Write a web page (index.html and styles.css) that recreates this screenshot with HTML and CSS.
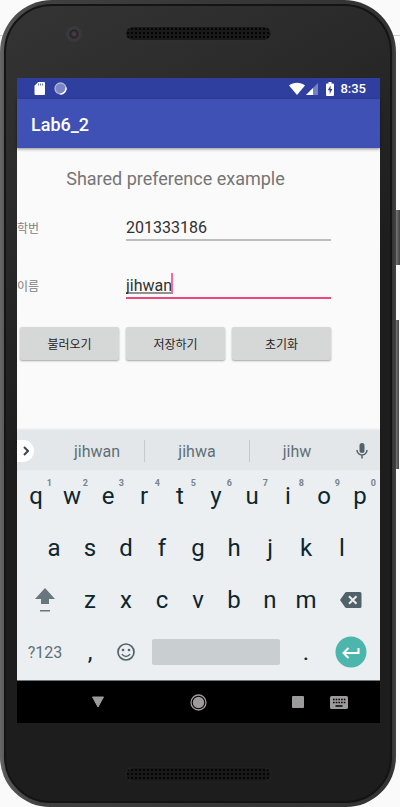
FILE: index.html
```html
<!DOCTYPE html>
<html lang="ko">
<head>
<meta charset="utf-8">
<meta name="viewport" content="width=device-width, initial-scale=1">
<title>Lab6_2</title>
<link rel="stylesheet" href="styles.css">
</head>
<body>
<div class="phone">
  <span class="side-button power"></span>
  <span class="side-button volume"></span>
  <div class="shell">
    <div class="bezel top"><span class="camera"></span><span class="speaker"></span></div>
    <div class="screen">
      <div class="status">
        <svg width="12" height="13" viewBox="0 0 12 13"><path fill="#fff" d="M4.200 0H10a1 1 0 0 1 1 1v11a1 1 0 0 1-1 1H1.500a1 1 0 0 1-1-1V3.800z"/><path stroke="#6f7bc0" stroke-width="1" d="M4.500 1.500v2M6.500 1.500v2M8.500 1.500v2"/></svg>
        <svg class="sync" width="13" height="13" viewBox="0 0 13 13"><circle cx="6.500" cy="6.500" r="5.500" fill="#7d86c5" stroke="#b0b6df" stroke-width="1.300"/><path d="M12 5.500A5.800 5.800 0 0 1 6.500 12" fill="none" stroke="#fff" stroke-width="1.400"/></svg>
        <svg class="wifi" width="16" height="13" viewBox="0 0 16 13"><path fill="#fff" d="M0 3.500C4.500-.2 11.500-.2 16 3.500L8 13z"/></svg>
        <svg width="12" height="12" viewBox="0 0 12 12"><path fill="#7781c3" d="M12 0v12H0z"/><path fill="#fff" d="M7 5v7H0z"/></svg>
        <svg class="battery" width="8" height="14" viewBox="0 0 8 14"><path fill="#fff" d="M2.500 0h3v1.500H7a1 1 0 0 1 1 1V13a1 1 0 0 1-1 1H1a1 1 0 0 1-1-1V2.500a1 1 0 0 1 1-1h1.500z"/><path fill="#2f3f9f" d="M4.600 3.500 1.800 8.300h1.900V12l2.700-5H4.600z"/></svg>
        <span class="clock">8:35</span>
      </div>
      <header class="appbar"><h1>Lab6_2</h1></header>
      <main>
        <h2>Shared preference example</h2>
        <form>
          <div class="field">
            <label for="sid">학번</label>
            <div class="box"><input id="sid" type="text" value="201333186"></div>
          </div>
          <div class="field">
            <label for="name">이름</label>
            <div class="box active"><input id="name" type="text" value="jihwan"><span class="caret"></span></div>
          </div>
          <div class="actions">
            <button type="button">불러오기</button>
            <button type="button">저장하기</button>
            <button type="button">초기화</button>
          </div>
        </form>
      </main>
      <div class="suggestions">
        <button type="button" class="more" aria-label="More"><svg width="6" height="10" viewBox="0 0 6 10"><path d="M1 1l4 4-4 4" fill="none" stroke="#37474f" stroke-width="2"/></svg></button>
        <button type="button">jihwan</button>
        <button type="button" class="middle">jihwa</button>
        <button type="button">jihw</button>
        <button type="button" aria-label="Voice input"><svg width="12" height="16" viewBox="0 0 12 16"><rect x="3.500" width="5" height="10" rx="2.500" fill="#52636b"/><path d="M1 7a5 5 0 0 0 10 0M6 12v3.500" fill="none" stroke="#52636b" stroke-width="1.500"/></svg></button>
      </div>
      <div class="keyboard">
        <div class="keys">
          <button type="button">q<sup>1</sup></button><button type="button">w<sup>2</sup></button><button type="button">e<sup>3</sup></button><button type="button">r<sup>4</sup></button><button type="button">t<sup>5</sup></button><button type="button">y<sup>6</sup></button><button type="button">u<sup>7</sup></button><button type="button">i<sup>8</sup></button><button type="button">o<sup>9</sup></button><button type="button">p<sup>0</sup></button>
        </div>
        <div class="keys home">
          <button type="button">a</button><button type="button">s</button><button type="button">d</button><button type="button">f</button><button type="button">g</button><button type="button">h</button><button type="button">j</button><button type="button">k</button><button type="button">l</button>
        </div>
        <div class="keys">
          <button type="button" class="wide" aria-label="Shift"><svg width="20" height="24" viewBox="0 0 20 24"><path fill="#68777d" d="M10 0l10 11h-6v5H6v-5H0z"/><path fill="#68777d" d="M5 22h10v1.500H5z"/></svg></button><button type="button">z</button><button type="button">x</button><button type="button">c</button><button type="button">v</button><button type="button">b</button><button type="button">n</button><button type="button">m</button><button type="button" class="wide" aria-label="Backspace"><svg width="22" height="16" viewBox="0 0 22 16"><path fill="#50616a" d="M6.500 0H20a1.500 1.500 0 0 1 1.500 1.500v13A1.500 1.500 0 0 1 20 16H6.500a2 2 0 0 1-1.600-.9L0 8 4.900.9A2 2 0 0 1 6.500 0z"/><path d="M9 4.200l7.500 7.600M16.500 4.200 9 11.800" stroke="#eceff1" stroke-width="2"/></svg></button>
        </div>
        <div class="keys">
          <button type="button" class="wide symbols">?123</button><button type="button">,</button><button type="button" aria-label="Emoji"><svg width="18" height="18" viewBox="0 0 18 18"><circle cx="9" cy="9" r="8" fill="none" stroke="#52636b" stroke-width="1.700"/><circle cx="6" cy="7" r="1.300" fill="#52636b"/><circle cx="12" cy="7" r="1.300" fill="#52636b"/><path d="M5 11a4.500 4.500 0 0 0 8 0" fill="none" stroke="#52636b" stroke-width="1.500"/></svg></button><button type="button" class="space" aria-label="Space"><span></span></button><button type="button">.</button><button type="button" class="wide" aria-label="Enter"><svg width="32" height="32" viewBox="0 0 32 32"><circle cx="16" cy="16" r="15.500" fill="#4db6ac"/><path d="M23.500 12v5H9M13.500 12l-5 5 5 5" fill="none" stroke="#fff" stroke-width="2"/></svg></button>
        </div>
      </div>
      <nav>
        <button type="button" class="back" aria-label="Back"><svg width="14" height="12" viewBox="0 0 14 12"><path fill="#9c9a9a" d="M1.500 1h11L7 11z" stroke="#9c9a9a" stroke-linejoin="round"/></svg></button>
        <button type="button" aria-label="Home"><svg width="17" height="17" viewBox="0 0 17 17"><circle cx="8.500" cy="8.500" r="7.500" fill="none" stroke="#9c9a9a" stroke-width="1.300"/><circle cx="8.500" cy="8.500" r="5.700" fill="#9c9a9a"/></svg></button>
        <button type="button" class="recent" aria-label="Recent apps"><svg width="12" height="12" viewBox="0 0 12 12"><rect width="12" height="12" rx="1" fill="#9c9a9a"/></svg></button>
        <button type="button" aria-label="Choose keyboard"><svg width="18" height="13" viewBox="0 0 18 13"><rect width="18" height="13" rx="1.500" fill="#9c9a9a"/><path d="M3 3.500h12.500M3 6.500h12.500" stroke="#000" stroke-width="1.600" stroke-dasharray="1.600 1.100"/><path d="M5.500 10h7" stroke="#000" stroke-width="1.500"/></svg></button>
      </nav>
    </div>
    <div class="bezel bottom"><span class="speaker"></span></div>
  </div>
</div>
</body>
</html>
```
FILE: styles.css
```css
* {
  box-sizing: border-box;
}

body {
  margin: 0;
  padding-right: 4px;
  background: linear-gradient(#fafafa 35px, #cfcfcf 35px, #cfcfcf 36px, #fafafa 36px);
  font-family: Roboto, "Noto Sans CJK KR", sans-serif;
}

h1,
h2 {
  margin: 0;
}

button {
  padding: 0;
  border: 0;
  background: none;
  color: inherit;
  font: inherit;
}

svg {
  display: block;
}

.phone {
  position: relative;
  padding: 4px;
  border-radius: 52px 52px 50px 50px;
  background: linear-gradient(to right, #686868, #575757 5px, #404040 40px, #383838 50%, #333 calc(100% - 4px), #454243);
}

.side-button {
  position: absolute;
  left: 100%;
  width: 4px;
  background: linear-gradient(to right, #777, #444);
}

.power {
  top: 210px;
  height: 55px;
}

.volume {
  top: 320px;
  width: 3px;
  height: 149px;
}

.shell {
  padding: 0 10px 0 11px;
  border: 2px solid #141414;
  border-radius: 48px 48px 46px 46px;
  background: linear-gradient(150deg, #343434, #2b2b2b 20%, #1d1d1d 45%, #1d1d1d);
}

.bezel {
  display: flex;
  position: relative;
  justify-content: center;
}

.top {
  height: 72px;
  padding-top: 21px;
}

.bottom {
  height: 78px;
  padding-top: 45px;
}

.speaker {
  width: 145px;
  height: 13px;
  border-radius: 7px;
  background: radial-gradient(circle, #050505 1px, transparent 1px) 0 0 / 4px 4px #191919;
  box-shadow: 0 0 1px #444;
}

.camera {
  position: absolute;
  top: 20px;
  left: 49px;
  width: 16px;
  height: 16px;
  border-radius: 50%;
  background: radial-gradient(circle, #4c3d46 1px, #20202a 4px, #3a3a3a 5px, #353535);
}

.status {
  display: flex;
  align-items: center;
  height: 21px;
  padding: 0 14px 0 17px;
  background: #2f3f9f;
  color: #fff;
}

.sync {
  margin-left: 8px;
}

.wifi {
  margin-right: 1px;
  margin-left: auto;
}

.battery {
  margin: 0 6px 0 8px;
}

.clock {
  font-size: 13px;
  font-weight: 500;
}

.appbar {
  display: flex;
  position: relative;
  align-items: center;
  height: 49px;
  padding: 2px 14px 0;
  background: #4051b5;
  box-shadow: 0 1px 3px rgba(0, 0, 0, 0.45);
  color: #fff;
}

.appbar h1 {
  font-size: 18px;
  font-weight: 500;
}

main {
  height: 282px;
  padding: 19px 49px 0 0;
  background: #fafafa;
}

h2 {
  padding-left: 3px;
  color: #757575;
  font-size: 18px;
  font-weight: 400;
  line-height: 24px;
  text-align: center;
}

form {
  padding-top: 20px;
}

.field {
  display: flex;
  height: 30px;
  margin-bottom: 28px;
}

.field label {
  width: 109px;
  color: #808080;
  font-size: 12px;
  line-height: 36px;
}

.box {
  display: flex;
  position: relative;
  flex: 1;
  border-bottom: 2px solid #bdbdbd;
}

.box input {
  width: 100%;
  padding: 5px 0 0;
  border: 0;
  outline: 0;
  background: none;
  color: #303030;
  font-family: inherit;
  font-size: 16px;
}

.box.active {
  border-color: #f1487c;
}

.active input {
  text-decoration: underline #909090 2px;
  text-decoration-skip-ink: none;
}

.caret {
  position: absolute;
  bottom: 3px;
  left: 45px;
  width: 2px;
  height: 21px;
  background: #f66a95;
}

.actions {
  display: grid;
  grid-template-columns: repeat(3, 1fr);
  gap: 7px;
  padding-left: 3px;
}

.actions button {
  height: 33px;
  border-radius: 2px;
  background: #d6d7d7;
  box-shadow: 0 1px 2px rgba(0, 0, 0, 0.35);
  color: #262626;
  font-size: 12px;
}

.suggestions {
  display: grid;
  position: relative;
  grid-template-columns: 33px 94fr 106fr 94fr 36px;
  align-items: center;
  height: 40px;
  padding-top: 2px;
  background: #e3e7ea;
  box-shadow: 0 -1px 2px rgba(0, 0, 0, 0.08);
  color: #5f6f76;
  font-size: 16px;
}

.suggestions button {
  display: flex;
  align-items: center;
  justify-content: center;
  height: 22px;
}

.suggestions .more {
  width: 17px;
  border-radius: 0 11px 11px 0;
  background: #fff;
}

.suggestions .middle {
  border: solid #c5cacd;
  border-width: 0 1px;
}

.keyboard {
  padding: 0 2px 2px 1px;
  background: #eceff1;
  color: #0b262f;
  font-size: 24px;
}

.keys {
  display: flex;
  height: 52px;
}

.home {
  padding: 0 18px;
}

.keys button {
  display: flex;
  position: relative;
  flex: 2;
  align-items: center;
  justify-content: center;
}

.keys .wide {
  flex: 3;
}

.keys .space {
  flex: 8;
}

.space span {
  flex: 1;
  height: 26px;
  margin: 0 8px;
  border-radius: 2px;
  background: #c9ced1;
}

.keys .symbols {
  color: #5f6f76;
  font-size: 16px;
}

sup {
  position: absolute;
  top: 8px;
  right: 2px;
  color: #77858b;
  font-size: 9px;
  font-weight: 700;
  line-height: 10px;
}

nav {
  display: grid;
  grid-template-columns: 30fr 101fr 100fr 29fr 42fr 40fr 21fr;
  align-items: center;
  height: 43px;
  border-top: 1px solid #70777a;
  background: #000;
}

nav button {
  display: flex;
  justify-content: center;
}

.back {
  grid-column: 2;
}

.recent {
  grid-column: 5;
}
```
